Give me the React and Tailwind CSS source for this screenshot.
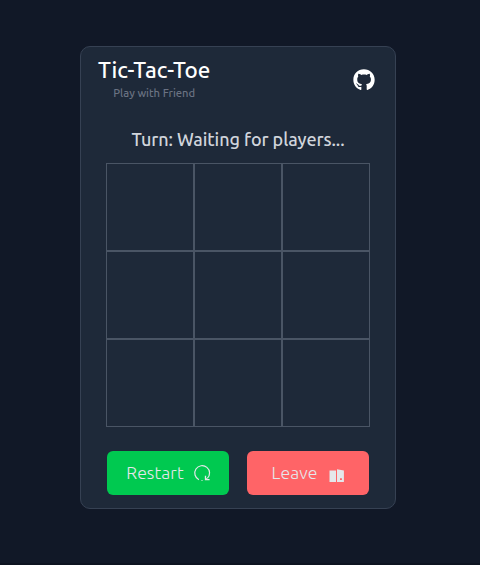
import { FaGithub } from "react-icons/fa";

function RestartIcon() {
  return (
    <svg className="h-[18px] w-[18px]" viewBox="0 0 18 18" fill="none" stroke="currentColor">
      <path d="M5.9 15.7A7.4 7.4 0 1 1 14.3 14.4" strokeWidth="1.2" />
      <path d="M12.5 11.8V15.7H16.6" strokeWidth="1.3" />
      <path d="M12.6 13.8L14.6 15.8" strokeWidth="1" />
      <path d="M8.5 16.5h1" strokeWidth="1" />
    </svg>
  );
}

function LeaveIcon() {
  return (
    <svg className="h-[14px] w-[16px]" viewBox="0 0 16 14" fill="currentColor">
      <path d="M.5 1.5H7V13H.5z" />
      <path fillRule="evenodd" d="M8 .2L14.9 1.5V13H8zM11 9.2v1.9h1.9V9.2z" />
    </svg>
  );
}

export default function App() {
  return (
    <main className="flex h-[565px] w-[480px] flex-col items-center overflow-hidden border-b-2 border-[#0d1320] bg-[#111827] pt-[46px] font-['Ubuntu','Noto_Sans',sans-serif]">
      <section className="mr-1 flex h-[463px] w-[316px] flex-col rounded-[10px] border border-[#364153] bg-[#1e2939]">
        <header className="flex h-[64px] items-center justify-between pr-5 pl-[17px]">
          <div className="flex h-[56px] flex-col items-center whitespace-nowrap pt-[5px]">
            <h1 className="text-[22.4px] leading-7 font-medium text-white">Tic-Tac-Toe</h1>
            <p className="mt-px text-[11.2px] leading-4 font-medium text-[#6a7282]">Play with Friend</p>
          </div>
          <FaGithub className="mt-0.5 size-[22px] text-white" />
        </header>
        <h2 className="mt-[14px] h-7 text-center text-[18px] leading-7 font-medium tracking-[-0.08px] whitespace-nowrap text-[#d1d5dc]">
          Turn: Waiting for players...
        </h2>
        <div className="mx-auto mt-[10px] grid w-[264px] grid-cols-3">
          {Array.from({ length: 9 }, (_, i) => (
            <button key={i} className="size-[88px] border border-[#4a5565]" aria-label={`Cell ${i + 1}`} />
          ))}
        </div>
        <footer className="mt-6 flex justify-center gap-[18px] text-[17.6px] font-light tracking-[0.08px] text-[#e5e7eb]">
          <button className="flex h-11 w-[122px] items-center justify-center gap-[9px] rounded-md bg-[#00c950] pl-px">
            <span>Restart</span>
            <RestartIcon />
          </button>
          <button className="flex h-11 w-[122px] items-center justify-center gap-3 rounded-md bg-[#ff6467] pl-px">
            <span>Leave</span>
            <span className="mt-1.5"><LeaveIcon /></span>
          </button>
        </footer>
      </section>
    </main>
  );
}
